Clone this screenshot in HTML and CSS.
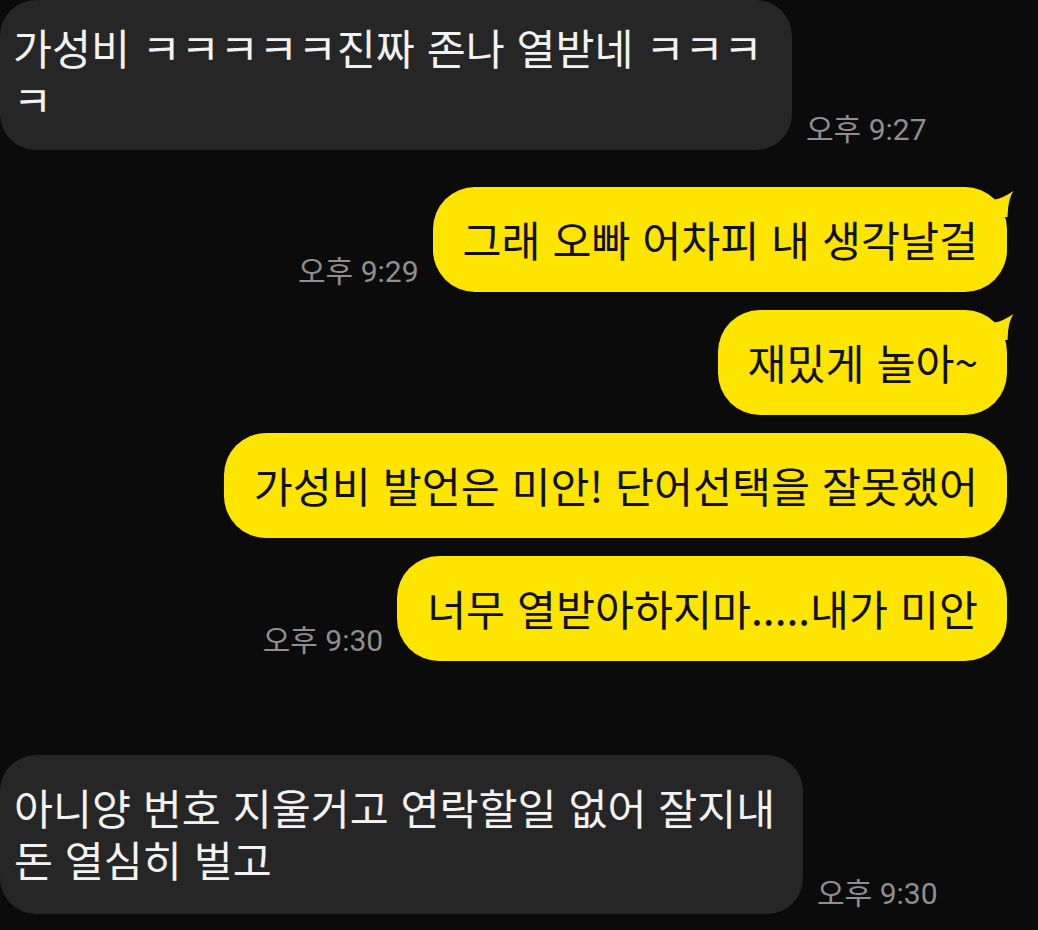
FILE: index.html
```html
<!DOCTYPE html>
<html lang="ko">
<head>
<meta charset="utf-8">
<title>채팅</title>
<link rel="stylesheet" href="styles.css">
</head>
<body>
<main class="chat">
  <div class="row in first">
    <div class="bubble gray b1">가성비 ㅋㅋㅋㅋㅋ진짜 존나 열받네 ㅋㅋㅋ<br>ㅋ</div>
    <span class="time">오후 9:27</span>
  </div>

  <div class="row out">
    <span class="time">오후 9:29</span>
    <div class="bubble yellow">그래 오빠 어차피 내 생각날걸<svg class="tail" viewBox="0 0 20 30" width="20" height="30"><path d="M0 12.6 Q8 11 18.5 4 Q13 11 12.5 30 L0 30 Z"/></svg></div>
  </div>

  <div class="row out">
    <div class="bubble yellow">재밌게 놀아~<svg class="tail" viewBox="0 0 20 30" width="20" height="30"><path d="M0 12.6 Q8 11 18.5 4 Q13 11 12.5 30 L0 30 Z"/></svg></div>
  </div>

  <div class="row out">
    <div class="bubble yellow">가성비 발언은 미안! 단어선택을 잘못했어</div>
  </div>

  <div class="row out">
    <span class="time">오후 9:30</span>
    <div class="bubble yellow">너무 열받아하지마.....내가 미안</div>
  </div>

  <div class="row in last">
    <div class="bubble gray b2">아니양 번호 지울거고 연락할일 없어 잘지내<br>돈 열심히 벌고</div>
    <span class="time">오후 9:30</span>
  </div>
</main>
</body>
</html>
```

FILE: styles.css
```css
html, body {
  margin: 0;
  padding: 0;
  background: #0b0b0b;
}

.chat {
  display: flex;
  flex-direction: column;
  gap: 18px;
  width: 1038px;
  height: 930px;
  overflow: hidden;
  font-family: "Noto Sans CJK KR", "Noto Sans", sans-serif;
}

.row {
  display: flex;
  align-items: flex-end;
  gap: 14px;
}

.row.in {
  justify-content: flex-start;
}

.row.out {
  justify-content: flex-end;
  padding-right: 31px;
}

.row.first {
  margin-bottom: 19px;
}

.row.last {
  margin-top: 76px;
}

.bubble {
  position: relative;
  font-size: 42.4px;
  line-height: 52px;
  white-space: nowrap;
}

.gray {
  background: #262626;
  color: #f2f2f2;
  border-radius: 36px;
}

.b1 {
  width: 792px;
  height: 150px;
  box-sizing: border-box;
  padding: 21px 0 0 13px;
}

.b2 {
  width: 803px;
  height: 159px;
  box-sizing: border-box;
  padding: 26px 0 0 14px;
}

.yellow {
  background: #fee500;
  color: #111;
  border-radius: 42px;
  height: 105px;
  box-sizing: border-box;
  padding: 26px 29px 0 30px;
}

/* speech tail rising from the top-right corner */
.tail {
  position: absolute;
  right: -8px;
  top: 0;
  fill: #fee500;
}

.time {
  font-family: Roboto, "Noto Sans CJK KR", sans-serif;
  font-size: 30px;
  line-height: 32px;
  color: #8f8f8f;
  padding-bottom: 4px;
  white-space: nowrap;
}
```
